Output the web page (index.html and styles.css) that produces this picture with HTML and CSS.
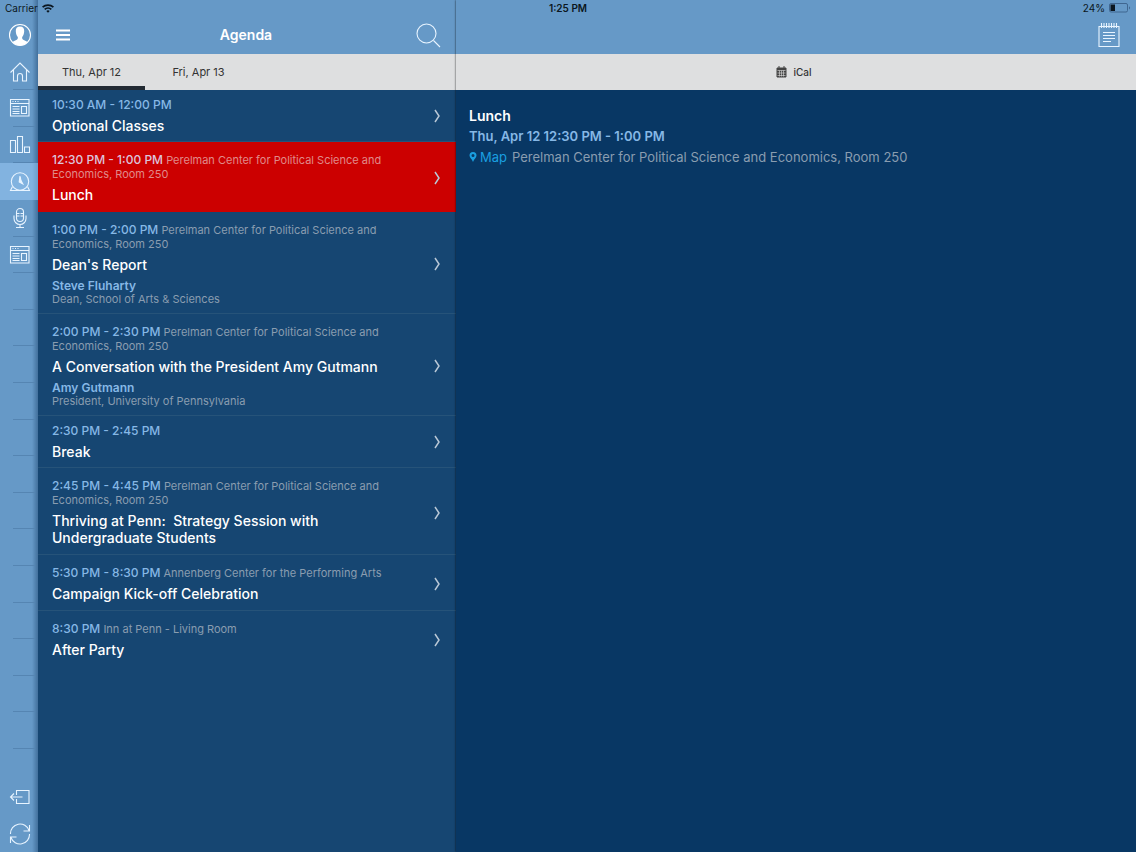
FILE: index.html
```html
<!DOCTYPE html>
<html lang="en">
<head>
    <meta charset="UTF-8">
    <meta name="viewport" content="width=device-width, initial-scale=1.0">
    <title>Agenda</title>
    <link rel="stylesheet" href="styles.css">
</head>
<body>
    <!-- Device status bar -->
    <div class="status-bar">
        <div class="status-left">
            <span>Carrier</span>
            <svg width="12" height="9" viewBox="0 0 12 9" fill="none" stroke="#0b1620" stroke-width="1.7">
                <path d="M.6 3.2C3.6.3 8.4.3 11.4 3.2M2.7 5.4c1.900-1.800 4.700-1.800 6.600 0"/>
                <path d="M6 8.8 4.3 7c1-.9 2.400-.9 3.400 0z" fill="#0b1620" stroke="none"/>
            </svg>
        </div>
        <div class="status-time">1:25 PM</div>
        <div class="status-right">
            <span>24%</span>
            <svg width="22" height="10" viewBox="0 0 22 10">
                <rect x=".5" y=".5" width="18" height="8.5" rx="1.5" fill="none" stroke="#3f6690"/>
                <rect x="1.5" y="1.5" width="4.5" height="6.5" fill="#0b1620"/>
                <path d="M20 3.2v3.2c1.400-.5 1.400-2.700 0-3.200z" fill="#3f6690"/>
            </svg>
        </div>
    </div>

    <div class="app">
        <aside class="sidebar">
            <nav class="menu">
                <a href="#profile" class="plain" aria-label="Profile">
                    <svg width="24" height="24" viewBox="0 0 24 24">
                        <circle cx="12" cy="12" r="10.5" fill="none" stroke="#fff" stroke-width="1.1"/>
                        <path d="M12 3.5c-3 0-4.400 2-4.200 4.800.1 2.600 1 4.500 2 5.700.3 1.600-.2 2.300-1.500 2.900-1.400.6-2.900 1-3.900 2.200 2 2.200 4.700 3.400 7.600 3.400s5.600-1.200 7.600-3.400c-1-1.200-2.500-1.600-3.900-2.200-1.300-.6-1.800-1.300-1.500-2.900 1-1.200 1.900-3.100 2-5.700.2-2.800-1.200-4.800-4.200-4.800z" fill="#fff"/>
                    </svg>
                </a>
                <a href="#home" aria-label="Home">
                    <svg class="icon" width="22" height="22" viewBox="0 0 22 22">
                        <path d="M1.500 11.500 11 2l9.500 9.500M4.500 9v11h4v-5a2.500 2.500 0 0 1 5 0v5h4V9"/>
                    </svg>
                </a>
                <a href="#news" aria-label="News">
                    <svg class="icon" width="22" height="22" viewBox="0 0 22 22">
                        <path d="M1.500 2.500h18.500v16.500H1.500zM1.500 6.500h18.500M3.500 4.500h1M6 4.500h1M8.500 4.500h1M12.500 9.500h5v7h-5zM3.500 9.500h7M3.500 12h7M3.500 14.500h7M3.500 16.500h7"/>
                    </svg>
                </a>
                <a href="#polls" aria-label="Polls">
                    <svg class="icon" width="22" height="22" viewBox="0 0 22 22">
                        <path d="M1.500 6.500h5v12h-5zM8.500 2.500h5v16h-5zM15.500 13h5v5.500h-5z"/>
                    </svg>
                </a>
                <a href="#agenda" class="plain active" aria-label="Agenda">
                    <svg class="icon" width="22" height="22" viewBox="0 0 22 22">
                        <circle cx="11" cy="10.500" r="8.700"/>
                        <path d="M3.500 15.500 1.500 19.500h19L18.500 15.500"/>
                        <path d="M11 5 10.200 11l3.600 2L12 9.500z" fill="#e8f4ff"/>
                    </svg>
                </a>
                <a href="#speakers" aria-label="Speakers">
                    <svg class="icon" width="22" height="22" viewBox="0 0 22 22">
                        <rect x="7.500" y="1.500" width="7" height="13" rx="3.500"/>
                        <path d="M5 8.500v3a6 6 0 0 0 12 0v-3M11 17.500v3M7 20.500h8M7.500 6.500h3M7.500 9h3M11.500 6.500h3M11.500 9h3"/>
                    </svg>
                </a>
                <a href="#info" aria-label="Info">
                    <svg class="icon" width="22" height="22" viewBox="0 0 22 22">
                        <path d="M1.500 2.500h18.500v16.500H1.500zM1.500 6.500h18.500M3.500 4.500h1M6 4.500h1M8.500 4.500h1M12.500 9.500h5v7h-5zM3.500 9.500h7M3.500 12h7M3.500 14.500h7M3.500 16.500h7"/>
                    </svg>
                </a>
                <span></span><span></span><span></span><span></span><span></span>
                <span></span><span></span><span></span><span></span><span></span>
                <span></span><span></span><span></span>
            </nav>
            <div class="menu-actions">
                <button aria-label="Log out">
                    <svg class="icon" width="22" height="22" viewBox="0 0 22 22">
                        <path d="M7.500 9V4.500h12.500v13H7.500V13M1.500 11h12M5 7.500 1.500 11 5 14.500"/>
                    </svg>
                </button>
                <button aria-label="Refresh">
                    <svg class="icon" width="22" height="22" viewBox="0 0 22 22">
                        <path d="M1.500 11A9.500 9.500 0 0 1 20 7.500M20.500 2v6h-6M20.500 11A9.500 9.500 0 0 1 2 14.500M1.500 20v-6h6"/>
                    </svg>
                </button>
            </div>
        </aside>

        <!-- Agenda list -->
        <section class="agenda">
            <header class="topbar">
                <button aria-label="Menu">
                    <svg width="24" height="24" viewBox="0 0 24 24" stroke="#fff" stroke-width="2.200">
                        <path d="M5 7.500h14M5 12h14M5 16.500h14"/>
                    </svg>
                </button>
                <h1>Agenda</h1>
                <button class="search" aria-label="Search">
                    <svg class="icon" width="26" height="26" viewBox="0 0 26 26">
                        <circle cx="11.500" cy="11.500" r="9.500"/>
                        <path d="M18.500 18.500 25 25"/>
                    </svg>
                </button>
            </header>
            <div class="tabs">
                <button class="tab selected">Thu, Apr 12</button>
                <button class="tab">Fri, Apr 13</button>
            </div>
            <ul class="sessions">
                <li>
                    <a href="#optional-classes" class="session no-place">
                        <div class="info">
                            <p class="when"><b>10:30 AM - 12:00 PM</b></p>
                            <h2>Optional Classes</h2>
                        </div>
                        <svg class="chevron" width="8" height="14" viewBox="0 0 8 14"><path d="M2 1q4 6 4 6t-4 6"/></svg>
                    </a>
                </li>
                <li>
                    <a href="#lunch" class="session current">
                        <div class="info">
                            <p class="when"><b>12:30 PM - 1:00 PM</b> Perelman Center for Political Science and Economics, Room 250</p>
                            <h2>Lunch</h2>
                        </div>
                        <svg class="chevron" width="8" height="14" viewBox="0 0 8 14"><path d="M2 1q4 6 4 6t-4 6"/></svg>
                    </a>
                </li>
                <li>
                    <a href="#deans-report" class="session">
                        <div class="info">
                            <p class="when"><b>1:00 PM - 2:00 PM</b> Perelman Center for Political Science and Economics, Room 250</p>
                            <h2>Dean's Report</h2>
                            <p class="speaker">Steve Fluharty</p>
                            <p class="role">Dean, School of Arts &amp; Sciences</p>
                        </div>
                        <svg class="chevron" width="8" height="14" viewBox="0 0 8 14"><path d="M2 1q4 6 4 6t-4 6"/></svg>
                    </a>
                </li>
                <li>
                    <a href="#conversation" class="session">
                        <div class="info">
                            <p class="when"><b>2:00 PM - 2:30 PM</b> Perelman Center for Political Science and Economics, Room 250</p>
                            <h2>A Conversation with the President Amy Gutmann</h2>
                            <p class="speaker">Amy Gutmann</p>
                            <p class="role">President, University of Pennsylvania</p>
                        </div>
                        <svg class="chevron" width="8" height="14" viewBox="0 0 8 14"><path d="M2 1q4 6 4 6t-4 6"/></svg>
                    </a>
                </li>
                <li>
                    <a href="#break" class="session no-place">
                        <div class="info">
                            <p class="when"><b>2:30 PM - 2:45 PM</b></p>
                            <h2>Break</h2>
                        </div>
                        <svg class="chevron" width="8" height="14" viewBox="0 0 8 14"><path d="M2 1q4 6 4 6t-4 6"/></svg>
                    </a>
                </li>
                <li>
                    <a href="#thriving" class="session">
                        <div class="info">
                            <p class="when"><b>2:45 PM - 4:45 PM</b> Perelman Center for Political Science and Economics, Room 250</p>
                            <h2>Thriving at Penn:&nbsp; Strategy Session with Undergraduate Students</h2>
                        </div>
                        <svg class="chevron" width="8" height="14" viewBox="0 0 8 14"><path d="M2 1q4 6 4 6t-4 6"/></svg>
                    </a>
                </li>
                <li>
                    <a href="#campaign" class="session">
                        <div class="info">
                            <p class="when"><b>5:30 PM - 8:30 PM</b> Annenberg Center for the Performing Arts</p>
                            <h2>Campaign Kick-off Celebration</h2>
                        </div>
                        <svg class="chevron" width="8" height="14" viewBox="0 0 8 14"><path d="M2 1q4 6 4 6t-4 6"/></svg>
                    </a>
                </li>
                <li>
                    <a href="#after-party" class="session">
                        <div class="info">
                            <p class="when"><b>8:30 PM</b> Inn at Penn - Living Room</p>
                            <h2>After Party</h2>
                        </div>
                        <svg class="chevron" width="8" height="14" viewBox="0 0 8 14"><path d="M2 1q4 6 4 6t-4 6"/></svg>
                    </a>
                </li>
            </ul>
        </section>

        <!-- Selected session -->
        <main class="detail">
            <header class="topbar detail-topbar">
                <button aria-label="Notes">
                    <svg class="icon" width="24" height="26" viewBox="0 0 24 26">
                        <path d="M2 4.500h20v20H2zM4.500 1v5M7 1v5M9.500 1v5M12 1v5M14.500 1v5M17 1v5M19.500 1v5M6 10.500h12M6 13.500h12M6 16.500h12M6 19.500h8"/>
                    </svg>
                </button>
            </header>
            <div class="toolbar">
                <button class="ical">
                    <svg width="11" height="12" viewBox="0 0 11 12">
                        <path d="M1 2h9v9H1zM3 0v3M8 0v3" fill="#444" stroke="#444"/>
                        <path d="M1.500 4.500h8M1.500 7h8M1.500 9.500h8M3.500 4.500v6M5.500 4.500v6M7.500 4.500v6" stroke="#ddd" stroke-width=".6"/>
                    </svg>
                    iCal
                </button>
            </div>
            <div class="detail-body">
                <h2>Lunch</h2>
                <p class="detail-time">Thu, Apr 12 12:30 PM - 1:00 PM</p>
                <p class="detail-place">
                    <a href="#map"><svg width="8" height="10" viewBox="0 0 8 10"><path fill-rule="evenodd" d="M4 0a3.500 3.500 0 0 0-3.500 3.500C.5 5.500 3 7 4 10c1-3 3.500-4.500 3.500-6.500A3.500 3.500 0 0 0 4 0zm0 2a1.500 1.500 0 1 1 0 3 1.500 1.500 0 0 1 0-3z" fill="#1a9fe0"/></svg>Map</a>
                    <span>Perelman Center for Political Science and Economics, Room 250</span>
                </p>
            </div>
        </main>
    </div>
</body>
</html>
```
FILE: styles.css
```css
* {
    box-sizing: border-box;
}

body {
    font-family: 'Inter', 'Liberation Sans', sans-serif;
    margin: 0;
    background-color: #083764;
    color: white;
}

h1, h2, p, ul {
    margin: 0;
    padding: 0;
}

ul {
    list-style-type: none;
}

a {
    text-decoration: none;
    color: inherit;
}

button {
    display: flex;
    align-items: center;
    justify-content: center;
    font-family: inherit;
    background: none;
    border: none;
    padding: 0;
    cursor: pointer;
}

svg {
    display: block;
    flex-shrink: 0;
}

.icon {
    fill: none;
    stroke: #e8f4ff;
    stroke-width: 1.1;
}

/* Status bar lies over all the panels */
.status-bar {
    position: absolute;
    top: 0;
    left: 0;
    right: 0;
    z-index: 2;
    height: 16px;
    padding: 0 5px;
    display: grid;
    grid-template-columns: 1fr auto 1fr;
    align-items: center;
    color: #0b1620;
    font-size: 10px;
}

.status-left, .status-right {
    display: flex;
    align-items: center;
    gap: 4px;
}

.status-right {
    justify-content: flex-end;
}

.status-time {
    font-weight: 600;
}

.app {
    display: flex;
    min-height: 100vh;
}

/* Sidebar */
.sidebar {
    width: 38px;
    flex-shrink: 0;
    padding-top: 17px;
    display: flex;
    flex-direction: column;
    gap: 30px;
    background: linear-gradient(to right, #6699c7 32px, #42709c);
}

.menu {
    flex: 20;
    display: flex;
    flex-direction: column;
}

.menu > * {
    flex: 1;
    display: flex;
    align-items: center;
    justify-content: center;
    padding-left: 2px;
    background: linear-gradient(#5585b2, #5585b2) 13px 100% / 22px 1px no-repeat;
}

.menu .plain {
    background: none;
}

.menu .active {
    background: linear-gradient(to right, #82b3e0 32px, #6d9ecb);
}

.menu-actions {
    flex: 2;
    display: flex;
    flex-direction: column;
}

.menu-actions button {
    flex: 1;
    padding-left: 2px;
}

/* Agenda */
.agenda {
    width: 418px;
    flex-shrink: 0;
    background-color: #164672;
}

.topbar {
    height: 54px;
    padding: 15px 15px 0 13px;
    display: grid;
    grid-template-columns: 1fr auto 1fr;
    align-items: center;
    background-color: #6699c7;
}

.topbar button {
    justify-self: start;
}

.topbar .search {
    justify-self: end;
}

.topbar h1 {
    font-size: 14px;
    font-weight: 600;
}

.tabs {
    height: 36px;
    display: flex;
    background-color: #dedfe0;
}

.tab {
    width: 107px;
    padding-top: 4px;
    font-size: 11px;
    color: #333;
    border-bottom: 4px solid transparent;
}

.tab.selected {
    border-bottom-color: #222a33;
}

.session {
    display: flex;
    align-items: center;
    padding: 11px 15px 8px 14px;
    border-bottom: 1px solid #265379;
}

.session.no-place {
    padding: 8px 15px 7px 14px;
}

li:last-child .session {
    border-bottom: none;
}

.session.current {
    background-color: #cc0000;
    border-bottom-color: #cc0000;
}

.info {
    flex: 1;
    padding-right: 24px;
}

.when {
    font-size: 11px;
    line-height: 14px;
    color: #8a9db0;
}

.when b {
    font-size: 12px;
    font-weight: 500;
    color: #86b8e6;
}

.current .when {
    color: #e08a8a;
}

.current .when b {
    color: #dcc4dc;
}

.session h2 {
    margin-top: 5px;
    font-size: 14px;
    line-height: 17px;
    font-weight: 500;
}

.speaker {
    margin-top: 5px;
    font-size: 12px;
    line-height: 15px;
    font-weight: 600;
    color: #86b8e6;
}

.role {
    font-size: 11px;
    line-height: 12px;
    color: #8a9db0;
}

.chevron {
    fill: none;
    stroke: #b9c8d6;
    stroke-width: 1.5;
}

/* Detail */
.detail {
    flex: 1;
    min-width: 0;
    box-shadow: 0 0 2px rgba(0, 0, 0, 0.8);
}

.detail-topbar {
    display: flex;
    justify-content: flex-end;
}

.toolbar {
    height: 36px;
    display: flex;
    justify-content: center;
    background-color: #dedfe0;
}

.ical {
    gap: 6px;
    padding-right: 4px;
    font-size: 10px;
    font-weight: 500;
    color: #333;
}

.detail-body {
    padding: 15px 13px;
    line-height: 21px;
}

.detail-body h2 {
    font-size: 14px;
    font-weight: 600;
}

.detail-time {
    font-size: 13px;
    font-weight: 600;
    color: #86b8e6;
}

.detail-place {
    display: flex;
    gap: 5px;
    font-size: 13px;
    line-height: 20px;
    color: #8a9db0;
}

.detail-place a {
    display: flex;
    align-items: center;
    gap: 3px;
    color: #1a9fe0;
}
```
